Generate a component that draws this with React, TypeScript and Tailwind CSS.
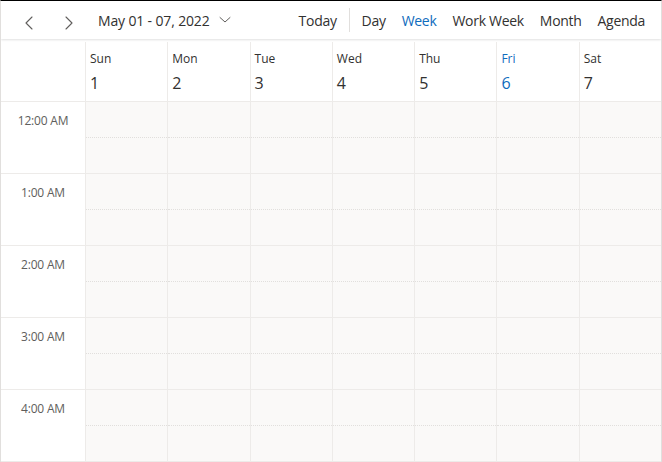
import React from "react";

const days = [
  { d: "Sun", n: "1" },
  { d: "Mon", n: "2" },
  { d: "Tue", n: "3" },
  { d: "Wed", n: "4" },
  { d: "Thu", n: "5" },
  { d: "Fri", n: "6", today: true },
  { d: "Sat", n: "7" },
];

const hours = ["12:00 AM", "1:00 AM", "2:00 AM", "3:00 AM", "4:00 AM"];

function Chevron({ dir }: { dir: "left" | "right" }) {
  return (
    <svg width="10" height="14" viewBox="0 0 10 14" fill="none" stroke="#605e5c" strokeWidth="1.1" strokeLinecap="round" strokeLinejoin="round">
      {dir === "left" ? <path d="M8 1 L2 7 L8 13" /> : <path d="M2 1 L8 7 L2 13" />}
    </svg>
  );
}

export default function App() {
  return (
    <div
      className="w-[662px] h-[462px] overflow-hidden bg-white border-t border-t-black border-l border-l-[#e1dfdd] border-r border-r-[#e1dfdd] flex flex-col"
      style={{ fontFamily: '"Open Sans", "Noto Sans", sans-serif' }}
    >
      <div className="h-[38px] shrink-0 flex items-center relative z-10 shadow-[0_1px_2px_rgba(0,0,0,0.12)] text-[14px] text-[#323130]">
        <div className="w-[10px] ml-[23px] mt-[5px] flex">
          <Chevron dir="left" />
        </div>
        <div className="w-[10px] ml-[30px] mt-[5px] flex">
          <Chevron dir="right" />
        </div>
        <div className="ml-[24px] flex items-center gap-[8px]">
          <span className="tracking-[-0.15px]">May 01 - 07, 2022</span>
          <svg width="12" height="8" viewBox="0 0 12 8" fill="none" stroke="#605e5c" strokeWidth="1" strokeLinecap="round" strokeLinejoin="round" className="ml-[1px]">
            <path d="M1 1.5 L6 6 L11 1.5" />
          </svg>
        </div>
        <div className="ml-auto flex items-center mr-[16px] tracking-[-0.3px]">
          <span>Today</span>
          <div className="w-px h-[24px] bg-[#e1dfdd] mx-[12px]" />
          <span>Day</span>
          <span className="ml-[16px] text-[#0f6cbd]">Week</span>
          <span className="ml-[16px]">Work Week</span>
          <span className="ml-[16px]">Month</span>
          <span className="ml-[16px]">Agenda</span>
        </div>
      </div>
      <div className="flex h-[63px] shrink-0 border-b border-[#edebe9]">
        <div className="w-[84px] shrink-0" />
        <div className="flex-1 grid grid-cols-7 pt-[3px]">
          {days.map((x) => (
            <div key={x.d} className={`border-l border-[#edebe9] pl-[4px] pt-[9px] ${x.today ? "text-[#0f6cbd]" : "text-[#323130]"}`}>
              <div className="text-[12px] leading-[16px]">{x.d}</div>
              <div className="text-[16px] leading-[22px] mt-[5px]">{x.n}</div>
            </div>
          ))}
        </div>
      </div>
      <div className="flex-1 overflow-hidden">
        {hours.map((h) => (
          <div key={h} className="flex h-[72px] border-b border-[#edebe9]">
            <div className="w-[84px] shrink-0 text-center text-[12px] text-[#605e5c] pt-[10px] tracking-[-0.2px]">{h}</div>
            <div className="flex-1 grid grid-cols-7 bg-[#faf9f8]">
              {days.map((x) => (
                <div key={x.d} className="border-l border-[#edebe9] flex flex-col">
                  <div className="h-[36px] border-b border-dotted border-[#e1dfdd]" />
                  <div className="flex-1" />
                </div>
              ))}
            </div>
          </div>
        ))}
      </div>
    </div>
  );
}
